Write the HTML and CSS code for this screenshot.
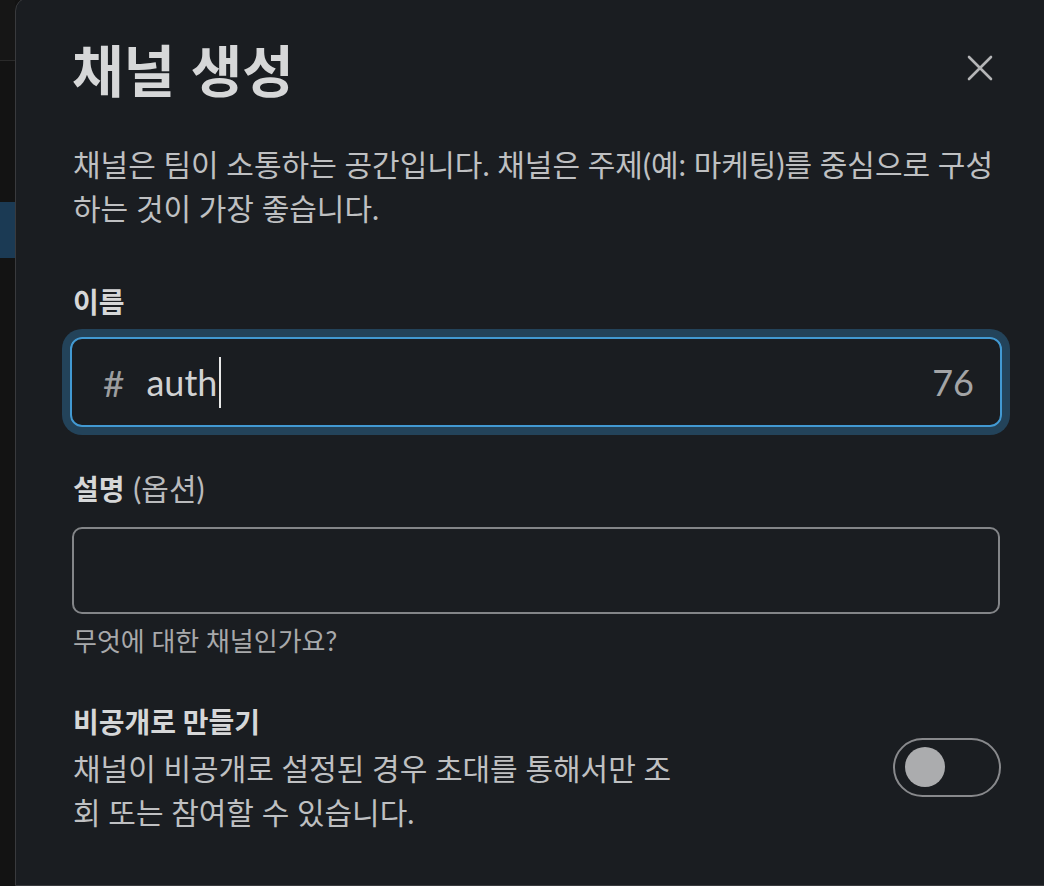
FILE: index.html
```html
<!DOCTYPE html>
<html lang="ko">
<head>
    <meta charset="UTF-8">
    <meta name="viewport" content="width=device-width, initial-scale=1.0">
    <title>채널 생성</title>
    <link rel="stylesheet" href="styles.css">
</head>
<body>
    <div class="sidebar">
        <div class="sidebar-top"></div>
        <div class="sidebar-active"></div>
    </div>
    <div class="modal">
        <div class="modal-header">
            <h1>채널 생성</h1>
            <button class="close-btn" aria-label="닫기">
                <svg width="26" height="26" viewBox="0 0 26 26">
                    <path d="M2 2 L24 24 M24 2 L2 24" stroke="#b4b5b7" stroke-width="2.6" stroke-linecap="round" />
                </svg>
            </button>
        </div>
        <p class="intro">채널은 팀이 소통하는 공간입니다. 채널은 주제(예: 마케팅)를 중심으로 구성하는 것이 가장 좋습니다.</p>

        <div class="field">
            <label class="field-label">이름</label>
            <div class="name-input">
                <span class="hash">#</span>
                <span class="value">auth</span><span class="caret"></span>
                <span class="counter">76</span>
            </div>
        </div>

        <div class="field field-desc">
            <label class="field-label">설명 <span class="optional">(옵션)</span></label>
            <div class="desc-input"></div>
            <p class="hint">무엇에 대한 채널인가요?</p>
        </div>

        <div class="private-row">
            <div class="private-text">
                <div class="private-title">비공개로 만들기</div>
                <p class="private-desc">채널이 비공개로 설정된 경우 초대를 통해서만 조회 또는 참여할 수 있습니다.</p>
            </div>
            <div class="toggle">
                <span class="knob"></span>
            </div>
        </div>
    </div>
</body>
</html>
```

FILE: styles.css
```css
body {
    margin: 0;
    height: 886px;
    overflow: hidden;
    display: flex;
    background: #131313;
    font-family: Lato, "Noto Sans CJK KR", sans-serif;
    color: #d1d2d3;
}

.sidebar {
    width: 15px;
    flex-shrink: 0;
}

.sidebar-top {
    height: 60px;
    background: #161616;
    border-bottom: 1px solid #2a2a2a;
}

.sidebar-active {
    margin-top: 141px;
    height: 56px;
    background: #1b3a54;
}

.modal {
    flex-shrink: 0;
    width: 928px;
    margin-top: -3px;
    padding: 0 57px 0 56px;
    background: #1a1d21;
    border: 1px solid #393a3d;
    border-radius: 14px 0 0 0;
}

.modal-header {
    display: flex;
    align-items: center;
    justify-content: space-between;
    padding-top: 38px;
}

.modal-header h1 {
    margin: 0;
    font-family: "Noto Sans CJK KR", sans-serif;
    font-size: 56px;
    font-weight: 700;
    line-height: 64px;
    color: #d6d7d8;
}

.close-btn {
    display: flex;
    margin-right: 7px;
    padding: 0;
    border: none;
    background: none;
}

.intro {
    margin: 42px 0 0 1px;
    font-size: 30px;
    line-height: 44px;
    color: #bfc0c2;
}

.field {
    margin-top: 52px;
}

.field-label {
    display: block;
    margin-left: 1px;
    font-size: 28px;
    font-weight: 700;
    line-height: 40px;
    color: #d6d7d8;
}

.optional {
    margin-left: 2px;
    font-size: 30px;
    font-weight: 400;
    color: #b9babc;
}

.name-input {
    display: flex;
    align-items: center;
    box-sizing: border-box;
    height: 90px;
    margin: 15px -2px 0 -2px;
    padding: 0 26px 0 31px;
    border: 2px solid #4299d2;
    border-radius: 12px;
    box-shadow: 0 0 0 8px #23435a;
    font-size: 36px;
}

.hash {
    color: #9c9d9f;
    font-size: 37px;
    margin-right: 22px;
}

.value {
    color: #d1d2d3;
}

.caret {
    width: 2px;
    height: 51px;
    margin-left: 2px;
    background: #e8e8e8;
}

.counter {
    margin-left: auto;
    color: #a3a4a6;
}

.field-desc {
    margin-top: 41px;
}

.desc-input {
    box-sizing: border-box;
    height: 87px;
    margin-top: 18px;
    border: 2px solid #838588;
    border-radius: 10px;
}

.hint {
    margin: 9px 0 0 1px;
    font-size: 26px;
    line-height: 36px;
    color: #a8a9ab;
}

.private-row {
    display: flex;
    align-items: center;
    justify-content: space-between;
    margin-top: 41px;
}

.private-text {
    width: 612px;
    margin-left: 1px;
}

.private-title {
    font-size: 28px;
    font-weight: 700;
    line-height: 44px;
    color: #d6d7d8;
}

.private-desc {
    margin: 2px 0 0;
    font-size: 30px;
    line-height: 44px;
    color: #bfc0c2;
}

.toggle {
    display: flex;
    align-items: center;
    box-sizing: border-box;
    width: 108px;
    height: 59px;
    margin-right: -1px;
    padding: 0 10px;
    border: 2px solid #88898c;
    border-radius: 30px;
}

.knob {
    width: 40px;
    height: 40px;
    border-radius: 50%;
    background: #abacae;
}
```
